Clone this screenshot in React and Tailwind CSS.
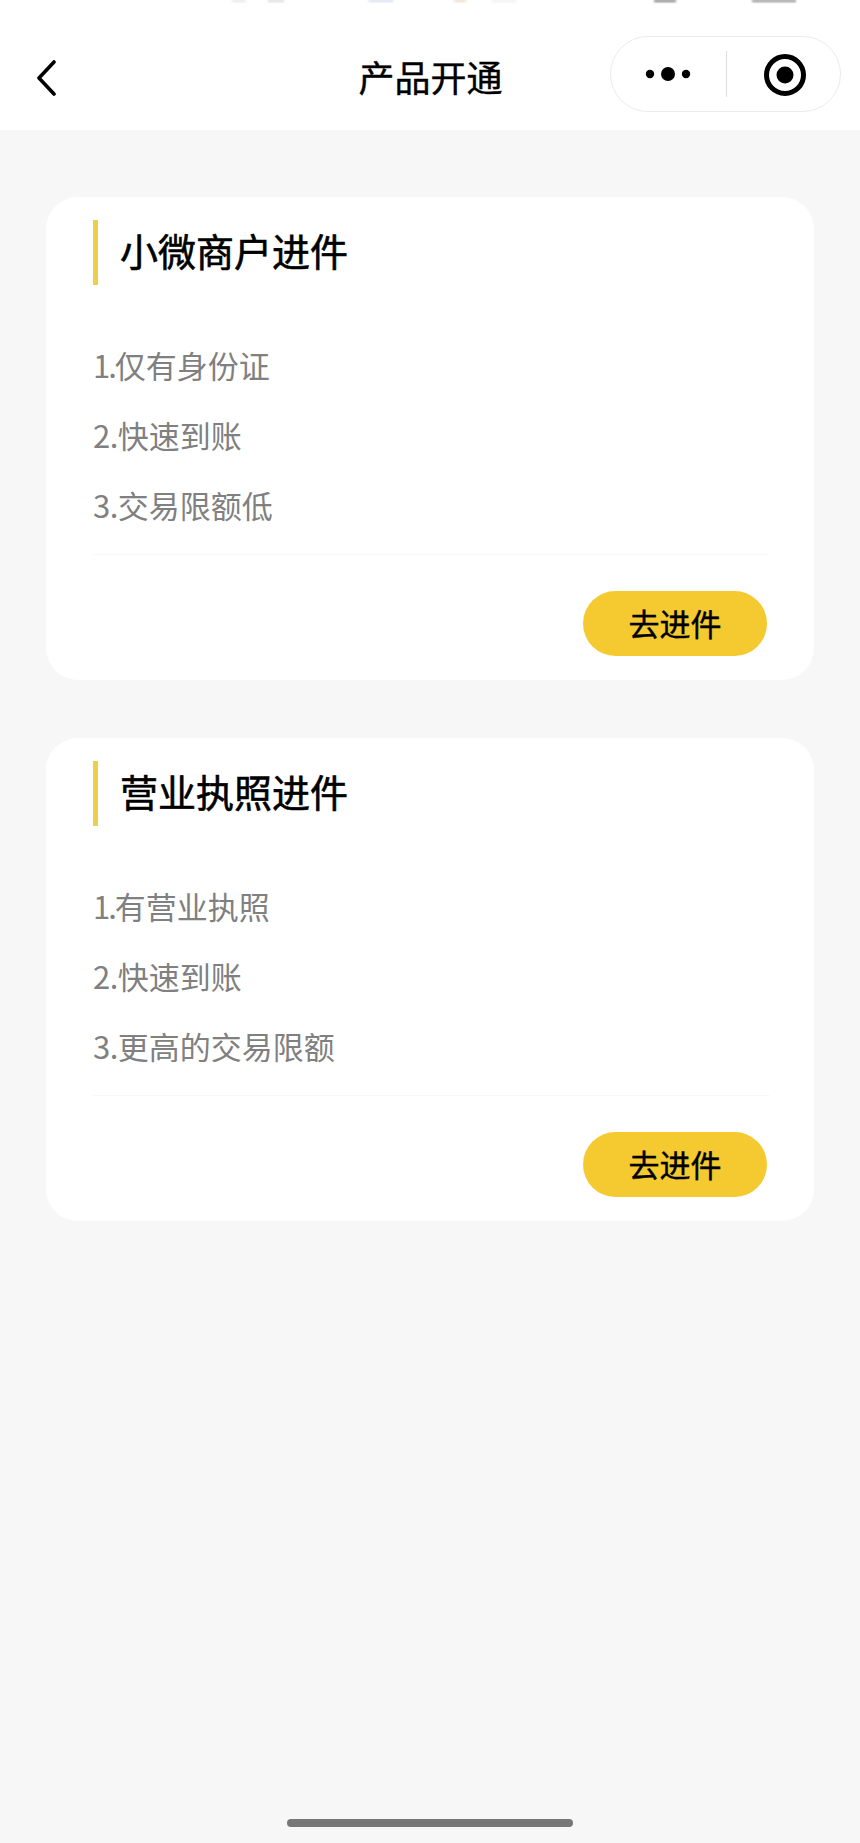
const cards = [
  {
    title: "小微商户进件",
    items: [
      ["1.", "仅有身份证"],
      ["2.", "快速到账"],
      ["3.", "交易限额低"],
    ],
  },
  {
    title: "营业执照进件",
    items: [
      ["1.", "有营业执照"],
      ["2.", "快速到账"],
      ["3.", "更高的交易限额"],
    ],
  },
]

function Card({ title, items }) {
  return (
    <section className="bg-white rounded-[32px] h-[483px] pt-[23px] px-[47px] flex flex-col">
      <div className="flex items-center h-[65px] border-l-[5px] border-[#ecd04a] pl-[22px]">
        <h2 className="text-[38px] leading-[54px] text-black -mt-[6px] [-webkit-text-stroke:0.6px_black]">{title}</h2>
      </div>
      <ul className="mt-[55px] flex flex-col gap-[20px] text-[31px] leading-[50px] text-[#808080]">
        {items.map(([num, text]) => (
          <li key={text}>
            <span className={num === "1." ? "tracking-[-2px]" : "tracking-[-0.5px]"}>{num}</span>
            {text}
          </li>
        ))}
      </ul>
      <div className="mt-[24px] h-px bg-[#f9f9f9] mr-[-3px]" />
      <div className="flex justify-end mt-[36px]">
        <button className="w-[184px] h-[65px] rounded-full bg-[#f4ca30] text-[31px] text-black pb-[1px] [-webkit-text-stroke:0.4px_black]">
          去进件
        </button>
      </div>
    </section>
  )
}

function App() {
  return (
    <div
      className="w-[860px] h-[1843px] bg-[#f7f7f7] flex flex-col overflow-hidden"
      style={{ fontFamily: '"Noto Sans CJK SC", "Noto Sans", sans-serif' }}
    >
      <header className="relative h-[130px] bg-white flex items-center shrink-0 pt-[26px] pl-[34px]">
        {/* cut off status bar */}
        <div className="absolute left-[232px] top-0 w-[14px] h-[2px] bg-[#e4e4e4] blur-[1px]" />
        <div className="absolute left-[268px] top-0 w-[16px] h-[2px] bg-[#d8d8d8] blur-[1px]" />
        <div className="absolute left-[368px] top-0 w-[26px] h-[2px] rounded-b-full bg-[#d3dcec] blur-[1px]" />
        <div className="absolute left-[454px] top-0 w-[12px] h-[2px] bg-[#eed6c0] blur-[1px]" />
        <div className="absolute left-[492px] top-0 w-[24px] h-[2px] bg-[#f0f0f0] blur-[1px]" />
        <div className="absolute left-[654px] top-0 w-[22px] h-[2px] bg-[#777777] blur-[1px]" />
        <div className="absolute left-[752px] top-0 w-[44px] h-[2px] bg-[#888888] blur-[1px]" />
        <svg width="24" height="36" viewBox="0 0 24 36" className="shrink-0">
          <path d="M20 2 L5 18 L20 34" fill="none" stroke="#000" strokeWidth="3.6" strokeLinecap="round" strokeLinejoin="round" />
        </svg>
        <h1 className="flex-1 text-center text-[36px] text-black pr-[57px] -mt-[4px] [-webkit-text-stroke:0.4px_black]">产品开通</h1>
        <div className="absolute left-[610px] top-[36px] w-[231px] h-[76px] rounded-full border border-[#ebebeb] flex items-center">
          <svg width="46" height="16" viewBox="0 0 46 16" className="ml-[34px]">
            <circle cx="5" cy="8" r="4.2" fill="#000" />
            <circle cx="23" cy="8" r="7" fill="#000" />
            <circle cx="41" cy="8" r="4.2" fill="#000" />
          </svg>
          <div className="ml-[35px] w-px h-[46px] bg-[#dddddd]" />
          <svg width="44" height="44" viewBox="0 0 44 44" className="ml-[36px] mt-[1px]">
            <circle cx="22" cy="22" r="18.5" fill="none" stroke="#000" strokeWidth="5" />
            <circle cx="22" cy="22" r="8.5" fill="#000" />
          </svg>
        </div>
      </header>

      <main className="flex-1 px-[46px] pt-[67px] flex flex-col gap-[58px]">
        {cards.map((card) => (
          <Card key={card.title} {...card} />
        ))}
      </main>

      <div className="flex justify-center pb-[16px]">
        <div className="w-[286px] h-[8px] rounded-full bg-[#777777]" />
      </div>
    </div>
  )
}

export default App
